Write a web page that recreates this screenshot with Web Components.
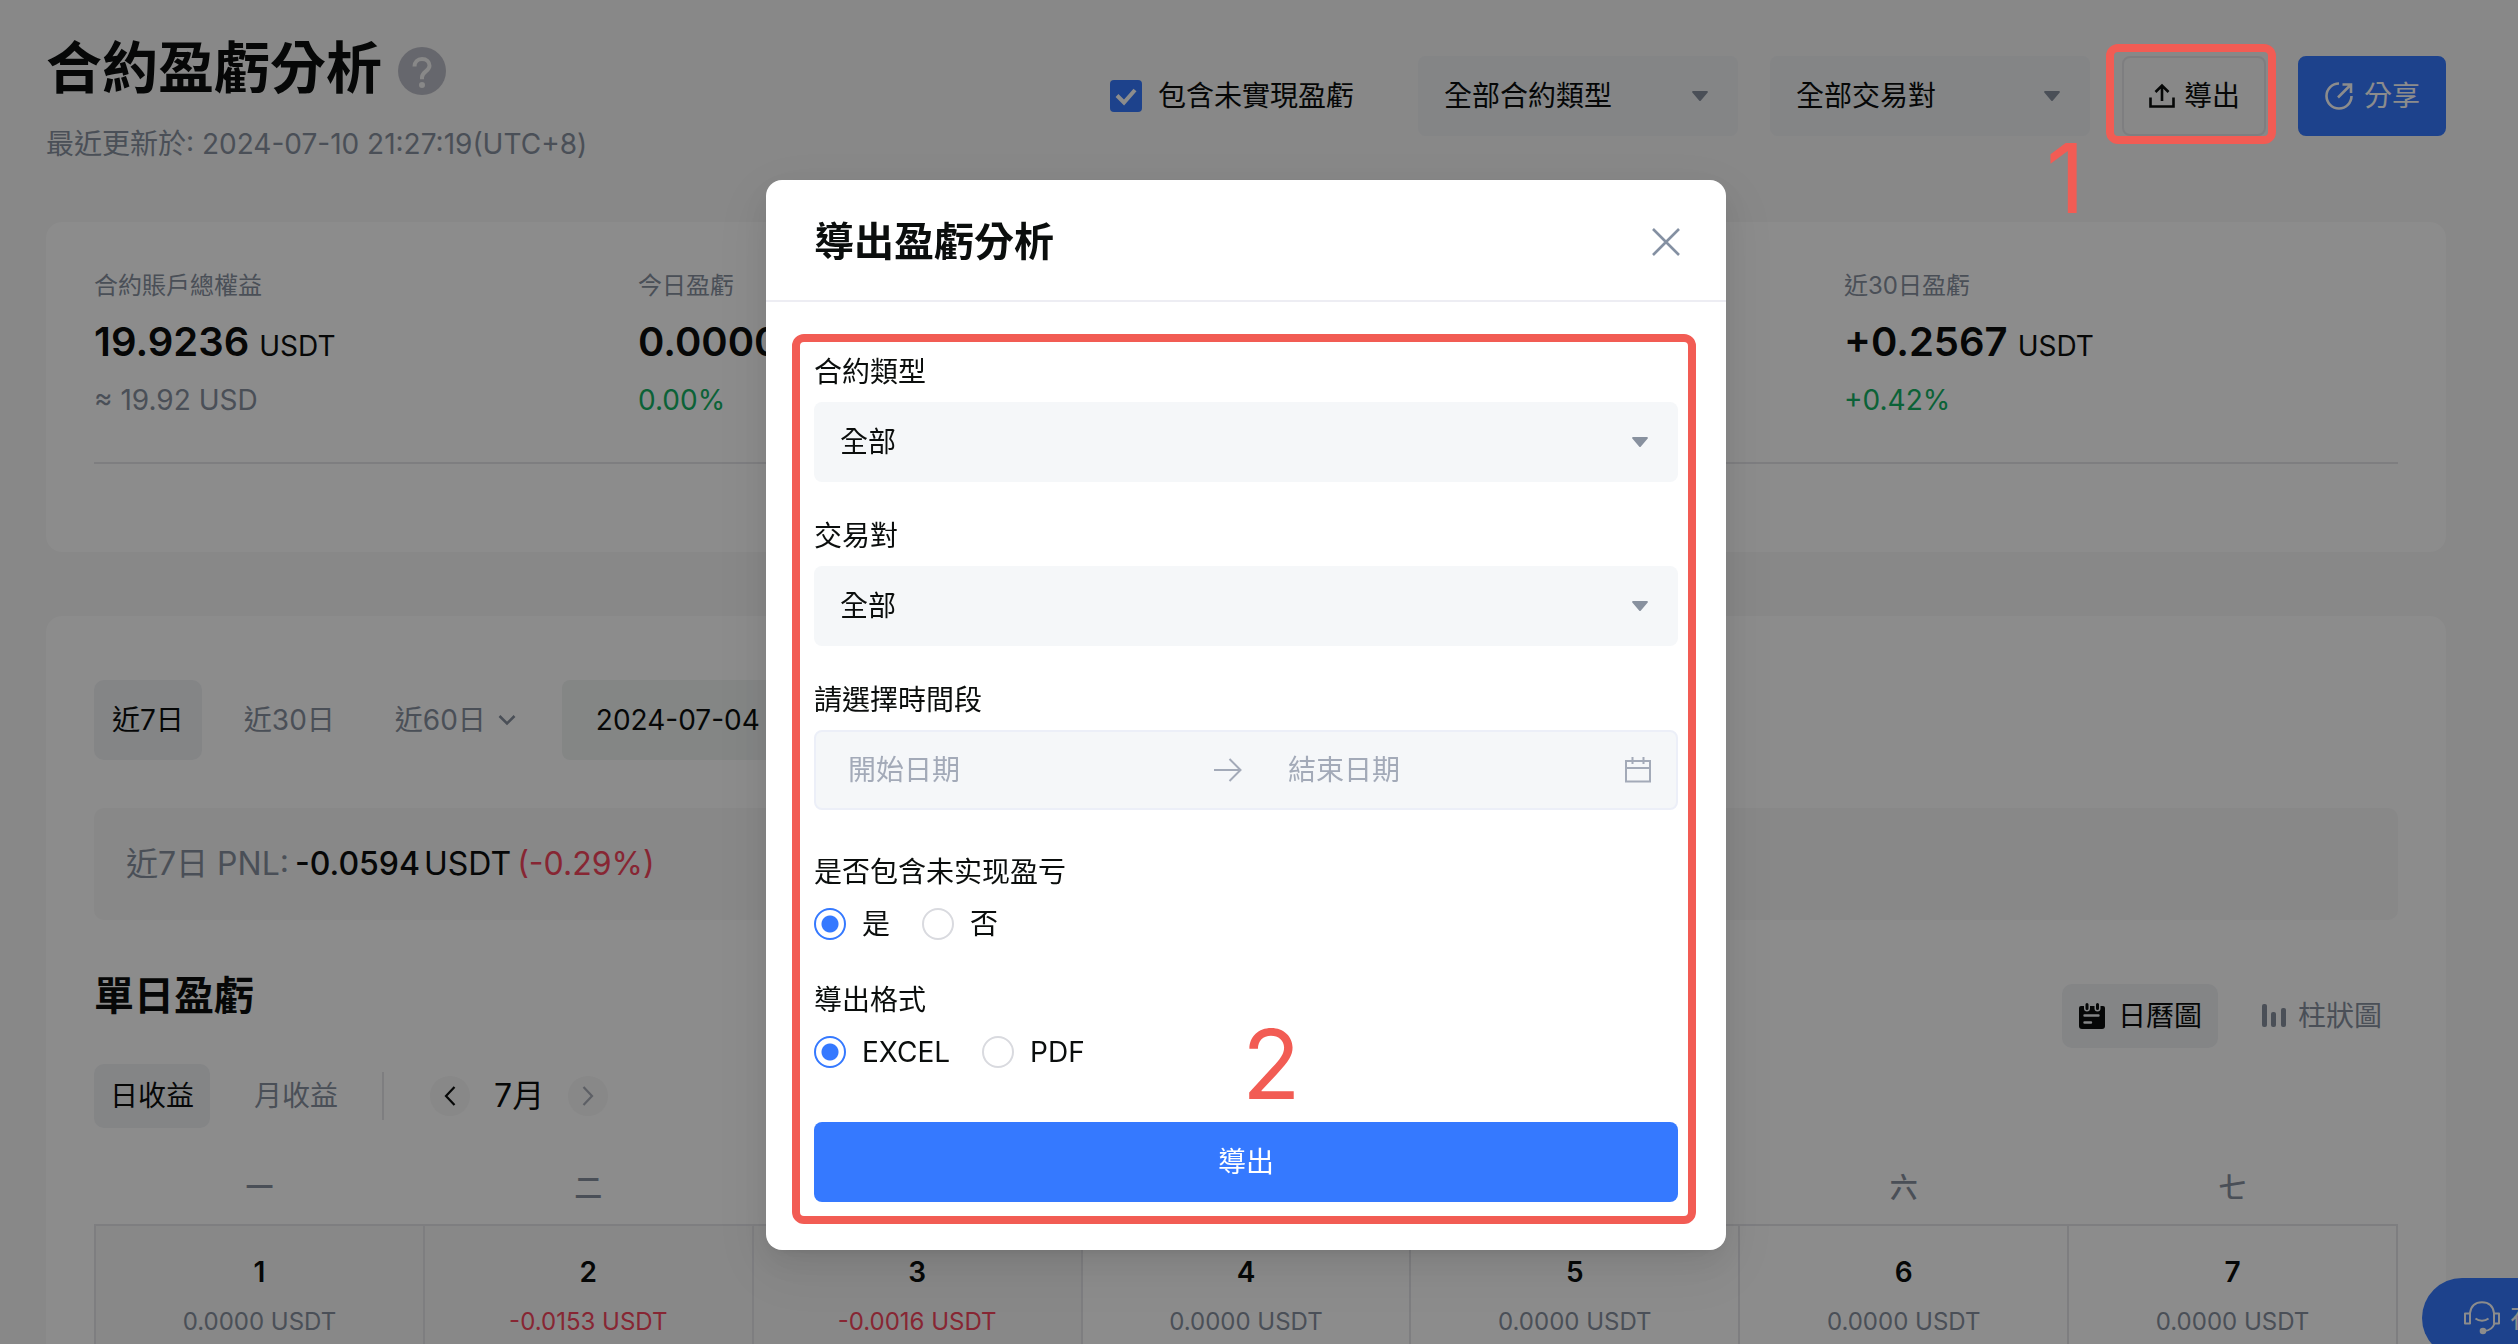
<!DOCTYPE html>
<html lang="zh-Hant">
<head>
<meta charset="utf-8">
<title>合約盈虧分析</title>
<style>
    body {
        margin: 0;
        background: #f7f7f7;
        color: #0b0e0d;
        font-family: Inter, "Noto Sans CJK TC", sans-serif;
        font-size: 28px;
        line-height: 40px;
        --muted: #88919f;
        --blue: #3579ff;
        --green: #14b264;
        --red: #f6465d;
        --mark: #f25c54;
        --fill: #f0f2f5;
        --line: #e6e6ea;
    }
</style>
</head>
<body>
<pnl-page></pnl-page>
<export-dialog></export-dialog>
<script>
const caret = `<svg class="caret" width="16" height="10" viewBox="0 0 16 10"><path d="M1 0h14a1 1 0 0 1 .7 1.600L8.900 9.400a1.200 1.200 0 0 1-1.800 0L.300 1.600A1 1 0 0 1 1 0z" fill="currentColor"/></svg>`;

class AppSelect extends HTMLElement {
    constructor() {
        super();
        this.attachShadow({ mode: 'open' });
    }

    connectedCallback() {
        const label = this.getAttribute('label');
        this.shadowRoot.innerHTML = `
            <style>
            :host {
                display: block;
            }
            label {
                display: block;
                margin-bottom: 10px;
            }
            .box {
                display: grid;
                align-items: center;
            }
            select {
                grid-area: 1 / 1;
                appearance: none;
                width: 100%;
                height: 80px;
                padding: 0 26px;
                border: 0;
                border-radius: 8px;
                background: var(--select-fill, var(--fill));
                color: inherit;
                font: inherit;
            }
            .caret {
                grid-area: 1 / 1;
                justify-self: end;
                margin-right: 30px;
                color: var(--muted);
                pointer-events: none;
            }
            </style>
            ${label ? `<label for="field">${label}</label>` : ''}
            <div class="box">
                <select id="field" aria-label="${label || this.getAttribute('value')}">
                    <option>${this.getAttribute('value')}</option>
                </select>
                ${caret}
            </div>
        `;
    }
}

class AppCheckbox extends HTMLElement {
    constructor() {
        super();
        this.attachShadow({ mode: 'open' });
    }

    connectedCallback() {
        this.shadowRoot.innerHTML = `
            <style>
            :host {
                display: block;
            }
            label {
                display: flex;
                align-items: center;
                gap: 16px;
            }
            .box {
                display: grid;
            }
            input {
                grid-area: 1 / 1;
                appearance: none;
                width: 32px;
                height: 32px;
                margin: 0;
                border-radius: 4px;
                background: var(--blue);
            }
            svg {
                grid-area: 1 / 1;
                pointer-events: none;
            }
            </style>
            <label>
                <span class="box">
                    <input type="checkbox" checked>
                    <svg width="32" height="32" viewBox="0 0 32 32" fill="none" stroke="#fff" stroke-width="4"><path d="M7 15.500l7 7L25 10"/></svg>
                </span>
                <slot></slot>
            </label>
        `;
    }
}

class TabButton extends HTMLElement {
    constructor() {
        super();
        this.attachShadow({ mode: 'open' });
    }

    connectedCallback() {
        this.shadowRoot.innerHTML = `
            <style>
            :host {
                display: block;
                --tab-height: 80px;
                --tab-pad: 18px;
            }
            :host([small]) {
                --tab-height: 64px;
                --tab-pad: 16px;
            }
            button {
                display: flex;
                align-items: center;
                gap: 12px;
                height: var(--tab-height);
                padding: 0 var(--tab-pad);
                border: 0;
                border-radius: 10px;
                background: none;
                color: var(--muted);
                font: inherit;
                white-space: nowrap;
            }
            :host([active]) button {
                background: var(--fill);
                color: #0b0e0d;
            }
            </style>
            <button type="button"><slot></slot></button>
        `;
    }
}

class StatItem extends HTMLElement {
    constructor() {
        super();
        this.attachShadow({ mode: 'open' });
    }

    connectedCallback() {
        this.shadowRoot.innerHTML = `
            <style>
            :host {
                display: flex;
                flex-direction: column;
                gap: 16px;
            }
            .label {
                color: var(--muted);
                font-size: 24px;
                line-height: 32px;
            }
            .value {
                display: flex;
                align-items: baseline;
                gap: 10px;
                font-size: 40px;
                font-weight: 600;
                line-height: 48px;
                white-space: nowrap;
            }
            .unit {
                font-size: 28px;
                font-weight: 400;
                line-height: 28px;
            }
            .note {
                color: var(--muted);
                line-height: 36px;
            }
            :host([up]) .note {
                color: var(--green);
            }
            </style>
            <span class="label">${this.getAttribute('label')}</span>
            <span class="value">${this.getAttribute('value')} <span class="unit">USDT</span></span>
            <span class="note"><slot></slot></span>
        `;
    }
}

// red box and step number drawn above the mask
class StepMark extends HTMLElement {
    constructor() {
        super();
        this.attachShadow({ mode: 'open' });
    }

    connectedCallback() {
        this.shadowRoot.innerHTML = `
            <style>
            :host {
                position: absolute;
                z-index: 20;
                border: 8px solid var(--mark);
                border-radius: 12px;
                pointer-events: none;
            }
            span {
                position: absolute;
                left: var(--num-left);
                bottom: var(--num-bottom);
                color: var(--mark);
                font-size: 96px;
                line-height: 96px;
            }
            </style>
            <span><slot></slot></span>
        `;
    }
}

class PageHeader extends HTMLElement {
    constructor() {
        super();
        this.attachShadow({ mode: 'open' });
    }

    connectedCallback() {
        this.shadowRoot.innerHTML = `
            <style>
            :host {
                display: flex;
                justify-content: space-between;
                align-items: flex-start;
            }
            h1 {
                display: flex;
                align-items: center;
                gap: 16px;
                margin: 0;
                font-size: 56px;
                font-weight: 700;
                line-height: 80px;
            }
            h1 svg {
                margin-top: 6px;
            }
            p {
                margin: 18px 0 0;
                color: var(--muted);
                line-height: 36px;
            }
            .tools {
                display: flex;
                align-items: center;
                gap: 32px;
                padding-top: 28px;
            }
            app-checkbox {
                margin-right: 32px;
            }
            app-select {
                width: 320px;
            }
            .export {
                position: relative;
            }
            step-mark {
                inset: -12px -10px -8px -16px;
                --num-left: -68px;
                --num-bottom: -90px;
            }
            button {
                display: flex;
                align-items: center;
                gap: 8px;
                box-sizing: border-box;
                height: 80px;
                padding: 0 24px;
                border: 2px solid var(--line);
                border-radius: 8px;
                background: none;
                color: inherit;
                font: inherit;
            }
            .share {
                gap: 10px;
                border-color: var(--blue);
                background: var(--blue);
                color: #fff;
            }
            </style>
            <div>
                <h1>合約盈虧分析
                    <svg width="48" height="48" viewBox="0 0 48 48" fill="none"><circle cx="24" cy="24" r="24" fill="#bbbcc6"/><path d="M16.500 19.500c0-4.500 3-7.500 7.500-7.500s7.500 2.800 7.500 6.800c0 5.400-7.500 5.800-7.500 11.400v2" stroke="#f7f7f7" stroke-width="4"/><circle cx="24" cy="38" r="3" fill="#f7f7f7"/></svg>
                </h1>
                <p>最近更新於: 2024-07-10 21:27:19(UTC+8)</p>
            </div>
            <div class="tools">
                <app-checkbox>包含未實現盈虧</app-checkbox>
                <app-select value="全部合約類型"></app-select>
                <app-select value="全部交易對"></app-select>
                <div class="export">
                    <button type="button">
                        <svg width="28" height="28" viewBox="0 0 28 28" fill="none" stroke="currentColor" stroke-width="2.600"><path d="M14 19V4M7.500 10L14 3.500 20.500 10M2.500 15.500v9h23v-9"/></svg>
                        導出
                    </button>
                    <step-mark>1</step-mark>
                </div>
                <button class="share" type="button">
                    <svg width="30" height="30" viewBox="0 0 30 30" fill="none" stroke="currentColor" stroke-width="2.600"><path d="M15 2.500A12.500 12.500 0 1 0 27.500 15M14 16.500L26.500 4M18.500 3.500H27V12"/></svg>
                    分享
                </button>
            </div>
        `;
    }
}

class AccountSummary extends HTMLElement {
    constructor() {
        super();
        this.attachShadow({ mode: 'open' });
    }

    connectedCallback() {
        this.shadowRoot.innerHTML = `
            <style>
            :host {
                display: block;
                padding: 48px 48px 88px;
                border-radius: 16px;
                background: #fff;
            }
            .stats {
                display: grid;
                grid-template-columns: 544fr 1206fr 554fr;
                padding-bottom: 44px;
                border-bottom: 2px solid var(--line);
            }
            </style>
            <div class="stats">
                <stat-item label="合約賬戶總權益" value="19.9236">≈ 19.92 USD</stat-item>
                <stat-item label="今日盈虧" value="0.0000" up>0.00%</stat-item>
                <stat-item label="近30日盈虧" value="+0.2567" up>+0.42%</stat-item>
            </div>
        `;
    }
}

class PnlCalendar extends HTMLElement {
    constructor() {
        super();
        this.attachShadow({ mode: 'open' });
    }

    connectedCallback() {
        const weekdays = ['一', '二', '三', '四', '五', '六', '七'];
        const amounts = ['0.0000', '-0.0153', '-0.0016', '0.0000', '0.0000', '0.0000', '0.0000'];
        this.shadowRoot.innerHTML = `
            <style>
            :host {
                display: block;
            }
            table {
                width: 100%;
                table-layout: fixed;
                border-collapse: collapse;
                text-align: center;
            }
            th {
                height: 72px;
                padding: 0;
                color: var(--muted);
                font-weight: 500;
            }
            td {
                height: 120px;
                padding: 26px 0;
                border: 2px solid var(--line);
                vertical-align: top;
            }
            td.past {
                background: #f7f7f7;
            }
            b {
                display: block;
                margin-bottom: 14px;
                font-weight: 600;
            }
            span {
                display: block;
                color: var(--muted);
                font-size: 24px;
                line-height: 32px;
            }
            .loss {
                color: var(--red);
            }
            </style>
            <table>
                <thead>
                    <tr>${weekdays.map(day => `<th>${day}</th>`).join('')}</tr>
                </thead>
                <tbody>
                    <tr>${amounts.map((amount, i) => `
                        <td class="${i < 3 ? 'past' : ''}"><b>${i + 1}</b><span class="${amount[0] === '-' ? 'loss' : ''}">${amount} USDT</span></td>`).join('')}
                    </tr>
                </tbody>
            </table>
        `;
    }
}

class DailyPnl extends HTMLElement {
    constructor() {
        super();
        this.attachShadow({ mode: 'open' });
    }

    connectedCallback() {
        this.shadowRoot.innerHTML = `
            <style>
            :host {
                display: block;
                padding: 64px 48px;
                border-radius: 16px;
                background: #fff;
            }
            .range, .head, .period, .month, .views {
                display: flex;
                align-items: center;
            }
            .range {
                gap: 24px;
            }
            .date {
                width: 640px;
                height: 80px;
                box-sizing: border-box;
                margin-left: 4px;
                padding: 0 34px;
                border: 0;
                border-radius: 8px;
                background: #f1f4f3;
                color: inherit;
                font: inherit;
            }
            .total {
                display: flex;
                gap: 6px;
                margin: 48px 0;
                padding: 36px 32px;
                border-radius: 10px;
                background: #f7f7f7;
                color: var(--muted);
                font-size: 32px;
            }
            .total b {
                display: flex;
                gap: 4px;
                color: #0b0e0d;
                font-weight: 500;
            }
            .unit {
                font-weight: 400;
            }
            .loss {
                color: var(--red);
            }
            .head {
                justify-content: space-between;
                align-items: flex-start;
            }
            h2 {
                margin: 0;
                font-size: 40px;
                font-weight: 700;
                line-height: 56px;
            }
            .views {
                gap: 28px;
                padding-top: 16px;
            }
            .period {
                gap: 28px;
                margin: 16px 0 24px;
            }
            .month {
                gap: 24px;
                margin-left: 18px;
                font-size: 32px;
            }
            .rule {
                width: 2px;
                height: 48px;
                background: var(--line);
            }
            .round {
                display: grid;
                place-items: center;
                width: 40px;
                height: 40px;
                padding: 0;
                border: 0;
                border-radius: 50%;
                background: #f7f7f7;
                color: inherit;
            }
            .round[disabled] {
                color: #a9aeb8;
            }
            </style>
            <div class="range">
                <tab-button active>近7日</tab-button>
                <tab-button>近30日</tab-button>
                <tab-button>近60日
                    <svg width="18" height="12" viewBox="0 0 18 12" fill="none" stroke="currentColor" stroke-width="2.600"><path d="M1.500 2L9 9.500 16.500 2"/></svg>
                </tab-button>
                <input class="date" type="text" value="2024-07-04" aria-label="日期">
            </div>
            <div class="total">近7日 PNL: <b>-0.0594 <span class="unit">USDT</span></b> <span class="loss">(-0.29%)</span></div>
            <div class="head">
                <h2>單日盈虧</h2>
                <div class="views">
                    <tab-button small active>
                        <svg width="28" height="28" viewBox="0 0 28 28"><path d="M3 4h22a2 2 0 0 1 2 2v18a3 3 0 0 1-3 3H4a3 3 0 0 1-3-3V6a2 2 0 0 1 2-2z" fill="#0b0e0d"/><path d="M9 2.500v4M19.500 2.500v4" stroke="#f0f2f5" stroke-width="6" stroke-linecap="round"/><path d="M9 2.500v4M19.500 2.500v4" stroke="#0b0e0d" stroke-width="3" stroke-linecap="round"/><path d="M6.500 13.500h14M6.500 20.500h6.500" stroke="#f0f2f5" stroke-width="2.400" stroke-linecap="round"/></svg>
                        日曆圖
                    </tab-button>
                    <tab-button small>
                        <svg width="24" height="26" viewBox="0 0 24 26" fill="currentColor"><rect y="1" width="5" height="23" rx="2"/><rect x="9" y="9" width="5" height="15" rx="2"/><rect x="19" y="5" width="5" height="19" rx="2"/></svg>
                        柱狀圖
                    </tab-button>
                </div>
            </div>
            <div class="period">
                <tab-button small active>日收益</tab-button>
                <tab-button small>月收益</tab-button>
                <span class="rule"></span>
                <div class="month">
                    <button class="round" type="button" aria-label="上個月"><svg width="12" height="20" viewBox="0 0 12 20" fill="none" stroke="currentColor" stroke-width="2.200"><path d="M10.500 1L2 10l8.500 9"/></svg></button>
                    <span>7月</span>
                    <button class="round" type="button" disabled aria-label="下個月"><svg width="12" height="20" viewBox="0 0 12 20" fill="none" stroke="currentColor" stroke-width="2.200"><path d="M1.500 1L10 10l-8.500 9"/></svg></button>
                </div>
            </div>
            <pnl-calendar></pnl-calendar>
        `;
    }
}

class SupportButton extends HTMLElement {
    constructor() {
        super();
        this.attachShadow({ mode: 'open' });
    }

    connectedCallback() {
        this.shadowRoot.innerHTML = `
            <style>
            :host {
                position: fixed;
                left: calc(100% - 96px);
                top: calc(100% - 66px);
            }
            button {
                display: flex;
                align-items: center;
                gap: 10px;
                height: 80px;
                padding: 0 42px;
                border: 0;
                border-radius: 40px;
                background: var(--blue);
                color: #fff;
                font: inherit;
                white-space: nowrap;
            }
            svg {
                flex: none;
            }
            </style>
            <button type="button">
                <svg width="36" height="34" viewBox="0 0 36 34" fill="none" stroke="currentColor" stroke-width="2"><path d="M6 12C7 5 11.500 1.200 18 1.200S29 5 30 12M1 12.500h5v10H1zM30 12.500h5v10h-5zM11.500 17.500c3.500 3 9.500 3 13 0M30.500 22.500c-1.500 4.500-5 7-10 7.500" stroke-linejoin="round"/><circle cx="19" cy="30" r="3.300" fill="currentColor" stroke="none"/></svg>
                在
            </button>
        `;
    }
}

class PnlPage extends HTMLElement {
    constructor() {
        super();
        this.attachShadow({ mode: 'open' });
    }

    connectedCallback() {
        this.shadowRoot.innerHTML = `
            <style>
            :host {
                display: block;
                box-sizing: border-box;
                height: 100vh;
                padding: 28px 72px 0 46px;
                overflow: hidden;
            }
            account-summary {
                margin: 60px 0 64px;
            }
            </style>
            <page-header></page-header>
            <account-summary></account-summary>
            <daily-pnl></daily-pnl>
            <support-button></support-button>
        `;
    }
}

class RadioField extends HTMLElement {
    constructor() {
        super();
        this.attachShadow({ mode: 'open' });
    }

    connectedCallback() {
        const options = this.getAttribute('options').split(',');
        this.shadowRoot.innerHTML = `
            <style>
            :host {
                display: block;
            }
            fieldset {
                display: flex;
                gap: 32px;
                margin: 0;
                padding: 0;
                border: 0;
            }
            legend {
                margin-bottom: 12px;
                padding: 0;
            }
            label {
                display: flex;
                align-items: center;
                gap: 16px;
            }
            input {
                appearance: none;
                box-sizing: border-box;
                width: 32px;
                height: 32px;
                margin: 0;
                border: 2px solid #d9dadf;
                border-radius: 50%;
            }
            input:checked {
                border-color: var(--blue);
                background: radial-gradient(circle, var(--blue) 8px, #fff 9px);
            }
            </style>
            <fieldset>
                <legend>${this.getAttribute('label')}</legend>
                ${options.map((option, i) => `<label><input type="radio" name="choice" ${i === 0 ? 'checked' : ''}>${option}</label>`).join('')}
            </fieldset>
        `;
    }
}

class DateRange extends HTMLElement {
    constructor() {
        super();
        this.attachShadow({ mode: 'open' });
    }

    connectedCallback() {
        this.shadowRoot.innerHTML = `
            <style>
            :host {
                display: block;
            }
            label {
                display: block;
                margin-bottom: 10px;
            }
            .box {
                display: flex;
                align-items: center;
                box-sizing: border-box;
                height: 80px;
                padding: 0 24px 0 32px;
                border: 2px solid #eceff8;
                border-radius: 8px;
                background: #f5f7f9;
                color: #a3aab8;
            }
            input {
                flex: 1;
                min-width: 0;
                padding: 0;
                border: 0;
                background: none;
                color: inherit;
                font: inherit;
            }
            input::placeholder {
                color: inherit;
                opacity: 1;
            }
            .arrow {
                margin: 0 46px 0 30px;
            }
            </style>
            <label for="start">請選擇時間段</label>
            <div class="box">
                <input id="start" type="text" placeholder="開始日期">
                <svg class="arrow" width="28" height="24" viewBox="0 0 28 24" fill="none" stroke="currentColor" stroke-width="2"><path d="M0 12h26M15.500 1L26.500 12l-11 11"/></svg>
                <input type="text" placeholder="結束日期" aria-label="結束日期">
                <svg width="28" height="28" viewBox="0 0 28 28" fill="none" stroke="currentColor" stroke-width="2"><path d="M2 5h24v20.500H2zM2 12h24M8.500 1v7M19.500 1v7"/></svg>
            </div>
        `;
    }
}

class ExportDialog extends HTMLElement {
    constructor() {
        super();
        this.attachShadow({ mode: 'open' });
    }

    connectedCallback() {
        this.shadowRoot.innerHTML = `
            <style>
            :host {
                position: fixed;
                inset: 0;
                z-index: 10;
                display: flex;
                justify-content: center;
                align-items: flex-start;
                padding: 180px 26px 0 0;
                background: rgba(0, 0, 0, .45);
                --select-fill: #f5f7f9;
            }
            section {
                width: 960px;
                border-radius: 16px;
                background: #fff;
                box-shadow: 0 12px 32px rgba(0, 0, 0, .08), 0 6px 12px -8px rgba(0, 0, 0, .12), 0 18px 56px 16px rgba(0, 0, 0, .05);
            }
            header {
                display: flex;
                align-items: center;
                justify-content: space-between;
                height: 116px;
                padding: 4px 46px 0 48px;
                border-bottom: 2px solid #ededf3;
            }
            h2 {
                margin: 0;
                font-size: 40px;
                font-weight: 700;
            }
            .close {
                padding: 0;
                border: 0;
                background: none;
                color: #8490a2;
                line-height: 0;
            }
            form {
                position: relative;
                display: flex;
                flex-direction: column;
                gap: 34px;
                margin: 50px 48px 48px;
            }
            radio-field {
                margin-top: 2px;
            }
            date-range + radio-field {
                margin-top: 8px;
            }
            .submit {
                height: 80px;
                margin-top: 16px;
                border: 0;
                border-radius: 8px;
                background: var(--blue);
                color: #fff;
                font: inherit;
            }
            step-mark {
                inset: -18px -18px -22px -22px;
                --num-left: 442px;
                --num-bottom: 104px;
            }
            </style>
            <section role="dialog" aria-label="導出盈虧分析">
                <header>
                    <h2>導出盈虧分析</h2>
                    <button class="close" type="button" aria-label="關閉"><svg width="28" height="28" viewBox="0 0 28 28" fill="none" stroke="currentColor" stroke-width="2.600"><path d="M1 1l26 26M27 1L1 27"/></svg></button>
                </header>
                <form>
                    <app-select label="合約類型" value="全部"></app-select>
                    <app-select label="交易對" value="全部"></app-select>
                    <date-range></date-range>
                    <radio-field label="是否包含未实现盈亏" options="是,否"></radio-field>
                    <radio-field label="導出格式" options="EXCEL,PDF"></radio-field>
                    <button class="submit" type="button">導出</button>
                    <step-mark>2</step-mark>
                </form>
            </section>
        `;
    }
}

customElements.define('app-select', AppSelect);
customElements.define('app-checkbox', AppCheckbox);
customElements.define('tab-button', TabButton);
customElements.define('stat-item', StatItem);
customElements.define('step-mark', StepMark);
customElements.define('page-header', PageHeader);
customElements.define('account-summary', AccountSummary);
customElements.define('pnl-calendar', PnlCalendar);
customElements.define('daily-pnl', DailyPnl);
customElements.define('support-button', SupportButton);
customElements.define('radio-field', RadioField);
customElements.define('date-range', DateRange);
customElements.define('pnl-page', PnlPage);
customElements.define('export-dialog', ExportDialog);
</script>
</body>
</html>
